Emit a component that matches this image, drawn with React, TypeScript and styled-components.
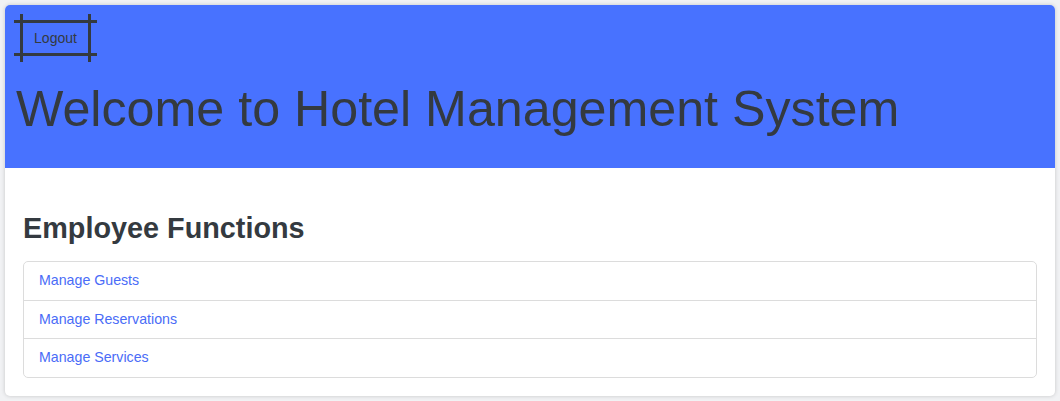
import React from 'react';
import styled, { createGlobalStyle } from 'styled-components';

const GlobalStyle = createGlobalStyle`
  html, body {
    margin: 0;
    padding: 0;
    background: #f1f2f4;
    font-family: "Liberation Sans", Arial, sans-serif;
  }
`;

const Page = styled.div`
  padding: 5px;
`;

const Card = styled.div`
  background: #ffffff;
  border-radius: 5px;
  box-shadow: 0 0 4px rgba(0, 0, 0, 0.18);
  overflow: hidden;
`;

const Header = styled.header`
  background: #4872ff;
  padding: 15px 11px 29px;
`;

const LogoutButton = styled.button`
  position: relative;
  display: block;
  margin-left: 4px;
  width: 71px;
  height: 36px;
  padding: 0;
  background: transparent;
  border: none;
  font-family: "Liberation Sans", Arial, sans-serif;
  font-size: 14px;
  color: #343a40;
  cursor: pointer;

  &::before {
    content: '';
    position: absolute;
    left: -6px;
    right: -6px;
    top: 0;
    bottom: 0;
    border-top: 3px solid #343a40;
    border-bottom: 3px solid #343a40;
  }

  &::after {
    content: '';
    position: absolute;
    left: 0;
    right: 0;
    top: -6px;
    bottom: -6px;
    border-left: 3px solid #343a40;
    border-right: 3px solid #343a40;
  }
`;

const Title = styled.h1`
  margin: 23px 0 0;
  font-size: 50.2px;
  font-weight: 400;
  line-height: 60px;
  color: #343a40;
`;

const Section = styled.section`
  padding: 44px 18px 18px;
`;

const SectionTitle = styled.h2`
  margin: 0 0 17px;
  font-size: 28.8px;
  font-weight: 700;
  line-height: 32px;
  color: #343a40;
`;

const LinkList = styled.ul`
  list-style: none;
  margin: 0;
  padding: 0;
  border: 1px solid #dcdcdc;
  border-radius: 5px;
`;

const LinkItem = styled.li`
  padding: 10px 15px;
  font-size: 14.2px;
  line-height: 17.5px;
  border-top: 1px solid #dcdcdc;

  &:first-child {
    border-top: none;
  }
`;

const NavLink = styled.a`
  color: #4a6cf7;
  text-decoration: none;
`;

const links = ['Manage Guests', 'Manage Reservations', 'Manage Services'];

export default function App() {
  return (
    <>
      <GlobalStyle />
      <Page>
        <Card>
          <Header>
            <LogoutButton>Logout</LogoutButton>
            <Title>Welcome to Hotel Management System</Title>
          </Header>
          <Section>
            <SectionTitle>Employee Functions</SectionTitle>
            <LinkList>
              {links.map((l) => (
                <LinkItem key={l}>
                  <NavLink href="#">{l}</NavLink>
                </LinkItem>
              ))}
            </LinkList>
          </Section>
        </Card>
      </Page>
    </>
  );
}
